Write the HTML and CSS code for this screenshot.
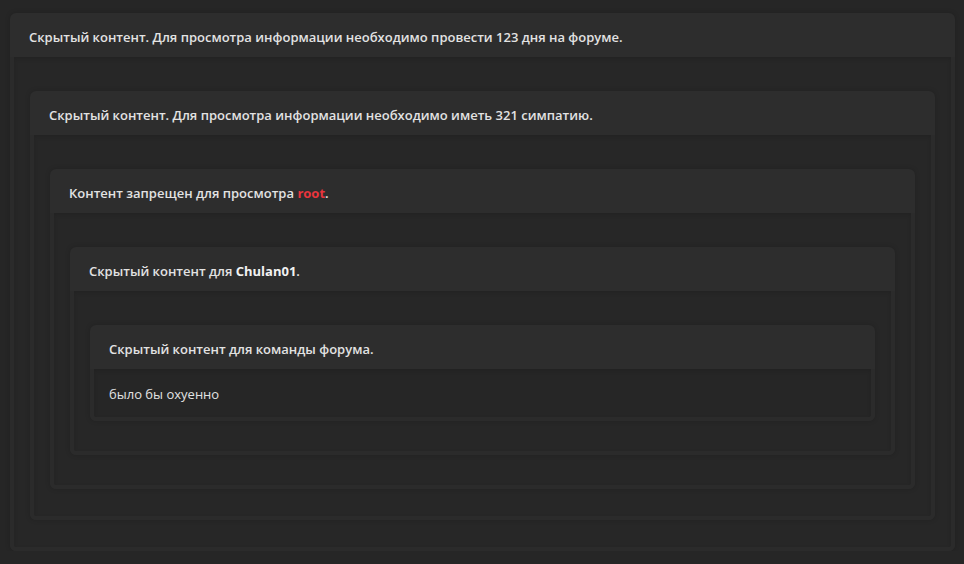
FILE: index.html
```html
<!DOCTYPE html>
<html lang="ru">
<head>
  <meta charset="UTF-8">
  <meta name="viewport" content="width=device-width, initial-scale=1.0">
  <title>Скрытый контент</title>
  <link rel="stylesheet" href="styles.css">
</head>
<body>
  <div class="hide-block">
    <div class="hide-title">Скрытый контент. Для просмотра информации необходимо провести 123 дня на форуме.</div>
    <div class="hide-content outer">
      <div class="hide-block">
        <div class="hide-title">Скрытый контент. Для просмотра информации необходимо иметь 321 симпатию.</div>
        <div class="hide-content outer">
          <div class="hide-block">
            <div class="hide-title">Контент запрещен для просмотра <span class="user-red">root</span>.</div>
            <div class="hide-content">
              <div class="hide-block">
                <div class="hide-title">Скрытый контент для <span class="user">Chulan01</span>.</div>
                <div class="hide-content">
                  <div class="hide-block">
                    <div class="hide-title">Скрытый контент для команды форума.</div>
                    <div class="hide-content hide-text">было бы охуенно</div>
                  </div>
                </div>
              </div>
            </div>
          </div>
        </div>
      </div>
    </div>
  </div>
</body>
</html>
```

FILE: styles.css
```css
body {
  margin: 0;
  padding: 13px 9px 0 10px;
  background-color: #262626;
  font-family: 'Open Sans', 'Noto Sans', sans-serif;
  font-size: 13px;
  line-height: 18px;
  color: #e2e2e2;
}

.hide-block {
  background-color: #2d2d2d;
  border-radius: 6px;
  box-shadow: 0 0 5px rgba(0, 0, 0, 0.18);
}

.hide-title {
  padding: 15px 19px 11px;
  font-weight: 600;
}

.user {
  font-weight: 700;
  color: #f2f2f2;
}

.user-red {
  font-weight: 700;
  color: #e8353d;
}

.hide-content {
  padding: 34px 16px 30px;
  background-color: #272727;
  border: 4px solid #2b2b2b;
  border-top: none;
  border-radius: 0 0 6px 6px;
  box-shadow: inset 0 2px 4px rgba(0, 0, 0, 0.12);
}

.hide-content.outer {
  padding-bottom: 27px;
}

.hide-text {
  padding: 16px 15px 14px;
  background-color: #262626;
}
```
